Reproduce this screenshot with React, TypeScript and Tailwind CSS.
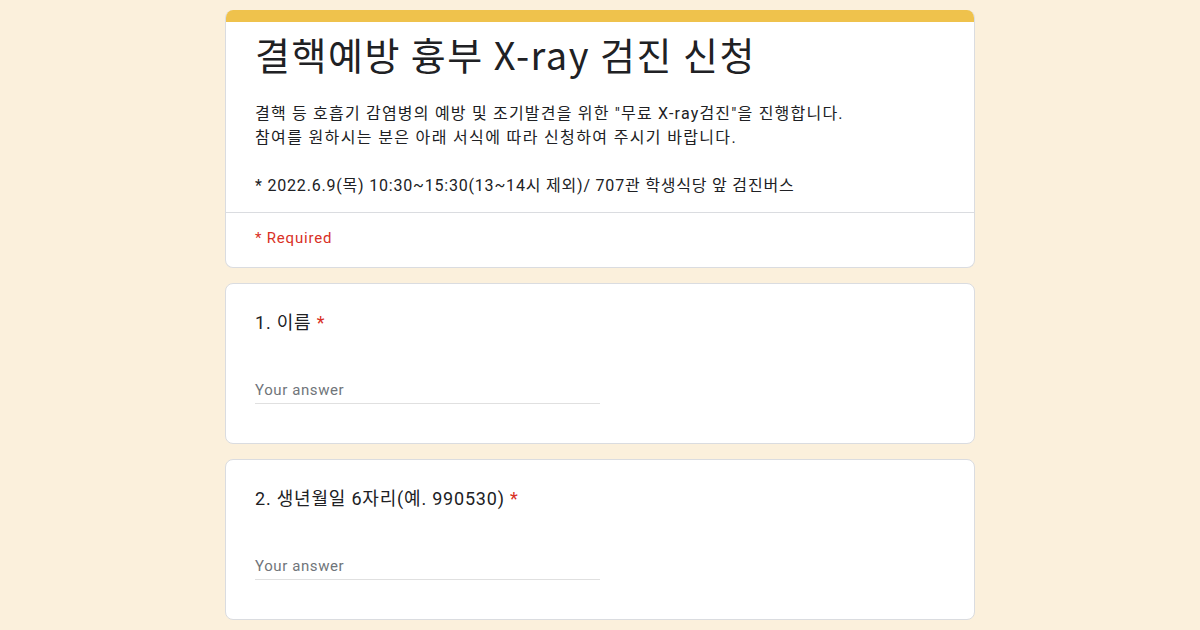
import React from 'react';

const kr = "font-['Roboto','Noto_Sans_CJK_KR',sans-serif]";

const Question: React.FC<{ label: string }> = ({ label }) => (
  <div className="bg-white border border-[#dadce0] rounded-[8px] h-[161px] px-[29px] pt-[27px]">
    <div className={`${kr} text-[18px] leading-[24px] tracking-[0.8px] text-[#202124]`}>
      {label} <span className="text-[#d93025]">*</span>
    </div>
    <div className="mt-[42px] w-[345px] border-b border-[#e0e0e0] pb-[2px]">
      <span className={`${kr} text-[15px] leading-[20px] text-[#70757a] tracking-[0.6px]`}>Your answer</span>
    </div>
  </div>
);

const App: React.FC = () => {
  return (
    <div className="w-[1200px] h-[630px] bg-[#fbf0dc] overflow-hidden">
      <div className="w-[750px] mx-auto pt-[10px] flex flex-col gap-[15px]">
        <div className="bg-white rounded-[8px] border border-[#dadce0] border-t-0 overflow-hidden">
          <div className="h-[12px] bg-[#efc24c]" />
          <div className="px-[29px] pt-[12px] pb-[14px] border-b border-[#dadce0]">
            <h1 className="font-['Noto_Sans_CJK_KR','Roboto',sans-serif] text-[38px] leading-[40px] tracking-[1.5px] text-[#202124]">
              결핵예방 흉부 X-ray 검진 신청
            </h1>
            <div className={`${kr} mt-[28px] text-[16px] leading-[24px] tracking-[1.2px] text-[#202124]`}>
              <p>결핵 등 호흡기 감염병의 예방 및 조기발견을 위한 "무료 X-ray검진"을 진행합니다.</p>
              <p className="tracking-[1.35px]">참여를 원하시는 분은 아래 서식에 따라 신청하여 주시기 바랍니다.</p>
              <p>&nbsp;</p>
              <p className="tracking-[0.8px]">* 2022.6.9(목) 10:30~15:30(13~14시 제외)/ 707관 학생식당 앞 검진버스</p>
            </div>
          </div>
          <div className={`${kr} px-[29px] pt-[15px] pb-[19px] text-[15px] leading-[20px] tracking-[0.8px] text-[#d93025]`}>
            * Required
          </div>
        </div>
        <Question label="1. 이름" />
        <Question label="2. 생년월일 6자리(예. 990530)" />
      </div>
    </div>
  );
};

export default App;
